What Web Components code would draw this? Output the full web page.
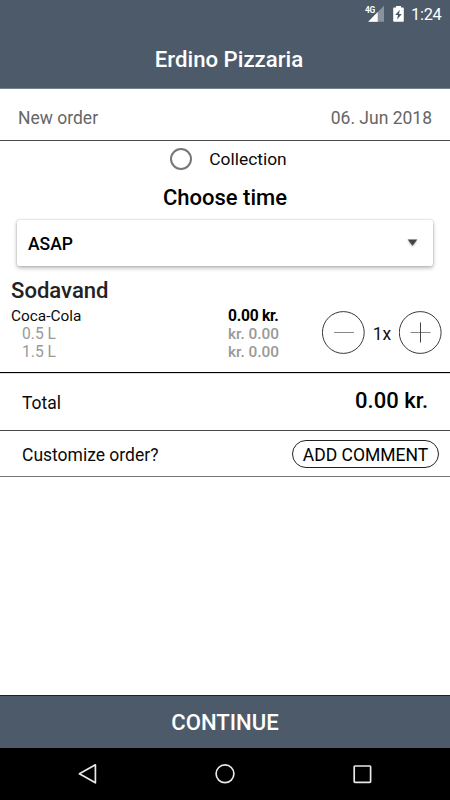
<!DOCTYPE html>
<html lang="en">
<head>
<meta charset="utf-8">
<title>Erdino Pizzaria</title>
<style>
  body { margin: 0; background: #fff; font-family: Roboto, "Liberation Sans", sans-serif; color: #0a0a0a; }
</style>
</head>
<body>
<order-screen></order-screen>
<script>
const define = (name, html) => {
  const template = document.createElement('template');
  template.innerHTML = html;
  customElements.define(name, class extends HTMLElement {
    constructor() {
      super();
      this.attachShadow({ mode: 'open' }).append(template.content.cloneNode(true));
    }
  });
};

define('status-bar', `
<style>
  :host { display: flex; height: 28px; box-sizing: border-box; justify-content: flex-end; align-items: center; padding: 0 8.5px 0 0; color: #fff; }
  svg { display: block; }
  .time { font-size: 16.4px; line-height: 20px; margin-left: 7px; font-weight: 400; letter-spacing: -.3px; padding-top: 1px; }
  .net { width: 20px; height: 28px; margin-right: 8px; position: relative; }
  .net span { position: absolute; left: 0; top: 6px; font-size: 8.4px; line-height: 9px; font-weight: 700; letter-spacing: -.3px; }
</style>
<div class="net"><svg width="20" height="28" viewBox="0 0 20 28"><path d="M19 5.7V21.7H3.2z" fill="#fff" fill-opacity=".35"/><path d="M12.7 12V21.7H3.2z" fill="#fff"/></svg><span>4G</span></div>
<svg width="11" height="28" viewBox="0 0 11 28"><path d="M3 6h5v1.4h2q.8 0 .8.8V21q0 .8-.8.8H1q-.8 0-.8-.8V8.2q0-.8.8-.8h2z" fill="#fff"/><path d="M6.8 9.8 2.2 15h2.7l-.8 4.6L8.8 14H6z" fill="#4c5a69"/></svg>
<span class="time">1:24</span>`);

define('app-header', `
<style>
  :host { display: block; height: 89px; box-sizing: border-box; background: #4c5a69; border-bottom: 1px solid #758190; color: #fff; }
  h1 { margin: 0; height: 60px; line-height: 62px; text-align: center; font-size: 22.2px; font-weight: 500; padding-left: 8px; }
</style>
<status-bar></status-bar><h1><slot></slot></h1>`);

define('info-row', `
<style>
  :host { display: flex; justify-content: space-between; align-items: center; box-sizing: border-box; font-size: 17.5px; }
</style>
<slot></slot><slot name="end"></slot>`);

define('radio-option', `
<style>
  :host { display: flex; align-items: center; justify-content: center; height: 35px; font-size: 17.4px; padding-left: 7px; }
  i { width: 22px; height: 22px; box-sizing: border-box; border: 2px solid #777; border-radius: 50%; margin-right: 17px; }
</style>
<i></i><slot></slot>`);

define('time-select', `
<style>
  :host { display: flex; align-items: center; justify-content: space-between; box-sizing: border-box; height: 46px; margin: 0 17px; padding: 1px 15px 0 11px; border-radius: 2px; font-size: 17.5px; font-weight: 500; color: #000; box-shadow: 0 0 1.5px rgba(0,0,0,.3), 0 2px 4px rgba(0,0,0,.28); }
  svg { display: block; filter: drop-shadow(0 1px 1px rgba(0,0,0,.3)); }
</style>
<slot></slot><svg width="11" height="10" viewBox="0 0 11 10"><path d="M.7 .5h9.6L5.5 6.8z" fill="#444"/></svg>`);

define('quantity-stepper', `
<style>
  :host { display: flex; align-items: center; font-size: 17.5px; color: #111; }
  svg { display: block; }
  span { width: 34px; text-align: center; padding-top: 2px; }
</style>
<svg width="43" height="43" viewBox="0 0 43 43" fill="none" stroke="#222"><circle cx="21.3" cy="21.5" r="20.9" stroke-width=".9"/><path d="M12 21.5h20" stroke="#888"/></svg>
<span><slot></slot></span>
<svg width="43" height="43" viewBox="0 0 43 43" fill="none" stroke="#222"><circle cx="21.2" cy="21.5" r="20.9" stroke-width=".9"/><path d="M11.5 21.5h20" stroke="#888"/><path d="M21.5 11.5v20" stroke="#444"/></svg>`);

define('order-item', `
<style>
  :host { display: grid; grid-template-columns: 217px 94px auto; height: 54px; padding-left: 11px; font-size: 15.6px; line-height: 18px; }
  .muted { color: #999; }
  .name, .price { padding-top: 1px; }
  .name .muted { padding-left: 11px; }
  .name .main { font-size: 15.4px; }
  .price .muted { font-weight: 500; font-size: 15.4px; }
  .price .main { font-weight: 700; color: #000; letter-spacing: -.25px; }
  quantity-stepper { height: 43px; margin-top: 5px; }
</style>
<div class="name"><div class="main">Coca-Cola</div><div class="muted">0.5 L</div><div class="muted">1.5 L</div></div>
<div class="price"><div class="main">0.00 kr.</div><div class="muted">kr. 0.00</div><div class="muted">kr. 0.00</div></div>
<quantity-stepper>1x</quantity-stepper>`);

define('pill-button', `
<style>
  :host { display: block; box-sizing: border-box; width: 147px; height: 28px; border: 1px solid #222; border-radius: 14px; text-align: center; line-height: 28px; font-size: 17.5px; color: #000; white-space: nowrap; }
</style><slot></slot>`);

define('continue-button', `
<style>
  :host { display: block; box-sizing: border-box; height: 53px; background: #4c5a69; border-top: 1px solid #18203f; color: #fff; text-align: center; line-height: 52px; font-size: 22.1px; font-weight: 500; }
</style><slot></slot>`);

define('nav-bar', `
<style>
  :host { display: block; height: 52px; background: #000; }
  svg { display: block; }
</style>
<svg width="450" height="52" viewBox="0 0 450 52" fill="none" stroke="#e8e8e8" stroke-width="1.7" stroke-linejoin="round"><path d="M95.4 16.8v18L79.4 25.8z"/><circle cx="225" cy="25.8" r="8.9"/><rect x="354.2" y="18" width="16.4" height="16.4" rx=".8"/></svg>`);

define('order-screen', `
<style>
  :host { display: flex; flex-direction: column; width: 450px; height: 800px; overflow: hidden; background: #fff; }
  .date { height: 52px; padding: 7px 18px 0; color: #666; border-bottom: 1px solid #4a4a4a; }
  h2 { margin: 8px 0 0; padding-top: 1px; text-align: center; font-size: 22px; line-height: 26px; font-weight: 500; height: 36px; box-sizing: border-box; color: #000; }
  h3 { margin: 11px 0 0 11px; font-size: 22.1px; line-height: 26px; height: 29px; font-weight: 500; color: #222; }
  .rule { height: 1px; background: #000; border-bottom: 1px solid #ddd; margin-top: 12px; }
  .total { height: 57px; padding: 0 22px; border-bottom: 1px solid #4a4a4a; }
  .total span { padding-top: 1px; }
  .total b { font-weight: 500; font-size: 22px; color: #000; padding-bottom: 3px; }
  .custom { height: 46px; padding: 0 11px 0 22px; border-bottom: 1px solid #777; }
  .custom span { padding-top: 2px; }
  .space { flex: 1; }
</style>
<app-header>Erdino Pizzaria</app-header>
<info-row class="date"><span>New order</span><span slot="end">06. Jun 2018</span></info-row>
<radio-option>Collection</radio-option>
<h2>Choose time</h2>
<time-select>ASAP</time-select>
<h3>Sodavand</h3>
<order-item></order-item>
<div class="rule"></div>
<info-row class="total"><span>Total</span><b slot="end">0.00 kr.</b></info-row>
<info-row class="custom"><span>Customize order?</span><pill-button slot="end">ADD COMMENT</pill-button></info-row>
<div class="space"></div>
<continue-button>CONTINUE</continue-button>
<nav-bar></nav-bar>`);
</script>
</body>
</html>
